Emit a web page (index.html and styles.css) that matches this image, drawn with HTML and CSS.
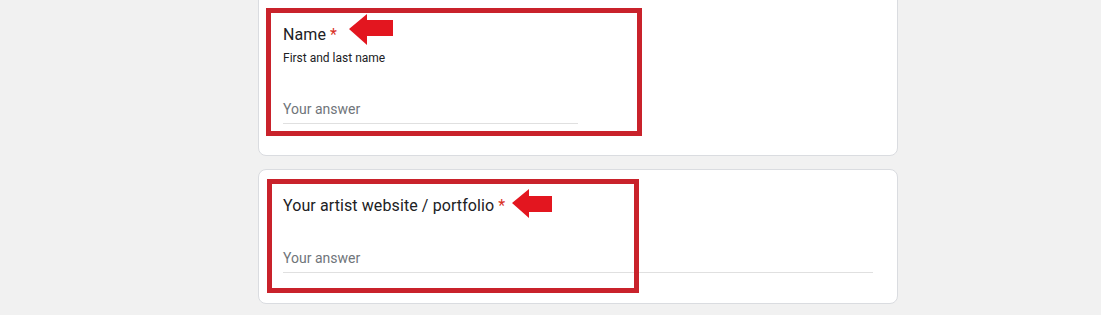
FILE: index.html
```html
<!DOCTYPE html>
<html>
<head>
<meta charset="utf-8">
<link rel="stylesheet" href="styles.css">
</head>
<body>
<main class="form">
  <section class="card card-first">
    <div class="title">Name<span class="req"> *</span></div>
    <div class="desc">First and last name</div>
    <div class="answer half">Your answer</div>
  </section>
  <section class="card">
    <div class="title">Your artist website / portfolio<span class="req"> *</span></div>
    <div class="answer full">Your answer</div>
  </section>
</main>

<div class="mark mark-one"></div>
<div class="mark mark-two"></div>

<svg class="arrow arrow-one" width="46" height="32" viewBox="0 0 46 32">
  <polygon points="0,15 18,0 18,6 44,6 44,22 18,22 18,31" fill="#e3161f"/>
</svg>
<svg class="arrow arrow-two" width="42" height="31" viewBox="0 0 42 31">
  <polygon points="0,14 17,0 17,7 40,7 40,23 17,23 17,29" fill="#e3161f"/>
</svg>
</body>
</html>
```
FILE: styles.css
```css
* { box-sizing: border-box; }
html, body { margin: 0; padding: 0; }
body {
  background: #f1f1f1;
  font-family: Roboto, "Liberation Sans", Arial, sans-serif;
  color: #202124;
  width: 1101px;
  height: 315px;
  overflow: hidden;
  position: relative;
}
.form {
  margin-left: 258px;
  width: 640px;
  display: flex;
  flex-direction: column;
  gap: 13px;
}
.card {
  background: #fff;
  border: 1px solid #dadce0;
  border-radius: 8px;
  padding: 24px 24px 30px 24px;
}
.card-first {
  margin-top: -12px;
  padding-top: 34px;
  padding-bottom: 31px;
}
.title {
  font-size: 16px;
  line-height: 24px;
  letter-spacing: 0.1px;
}
.req { color: #d93025; }
.desc {
  font-size: 12px;
  line-height: 18px;
  margin-top: 2px;
}
.answer {
  font-size: 14px;
  line-height: 20px;
  color: #70757a;
  border-bottom: 1px solid #e0e0e0;
  padding-bottom: 4px;
}
.answer.half { width: 295px; margin-top: 32px; }
.answer.full { width: 590px; margin-top: 30px; }

.mark {
  position: absolute;
  border: 5px solid #c9222b;
}
.mark-one { left: 266px; top: 8px; width: 376px; height: 128px; }
.mark-two { left: 267px; top: 179px; width: 372px; height: 114px; }

.arrow { position: absolute; display: block; }
.arrow-one { left: 349px; top: 14px; }
.arrow-two { left: 512px; top: 189px; }
```
